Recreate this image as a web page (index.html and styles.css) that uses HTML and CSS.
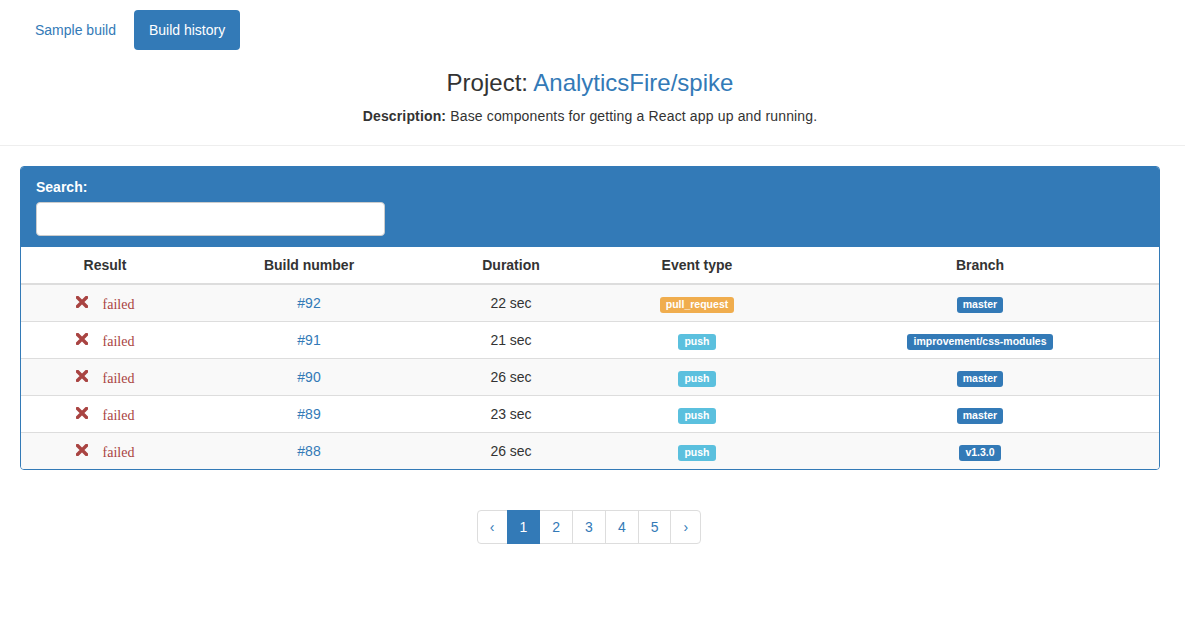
FILE: index.html
```html
<!DOCTYPE html>
<html>
<head>
<meta charset="utf-8">
<link rel="stylesheet" href="styles.css">
</head>
<body>
<div class="wrap">
  <ul class="pills">
    <li><a href="#">Sample build</a></li>
    <li class="active"><a href="#">Build history</a></li>
  </ul>
  <h3 class="title">Project: <a href="#">AnalyticsFire/spike</a></h3>
  <p class="desc"><strong>Description:</strong> Base components for getting a React app up and running.</p>
</div>
<hr class="rule">
<div class="wrap">
  <div class="panel">
    <div class="panel-heading">
      <label class="search-label">Search:</label>
      <input class="search-input" type="text">
    </div>
    <table class="builds">
      <colgroup>
        <col class="c1"><col class="c2"><col class="c3"><col class="c4"><col>
      </colgroup>
      <thead>
        <tr><th>Result</th><th>Build number</th><th>Duration</th><th>Event type</th><th>Branch</th></tr>
      </thead>
      <tbody>
        <tr>
          <td><span class="res"><svg class="x" viewBox="0 0 12 12"><path d="M1.5 1.5L10.5 10.5M10.5 1.5L1.5 10.5"/></svg><span class="failed">failed</span></span></td>
          <td><a href="#">#92</a></td><td>22 sec</td>
          <td><span class="label warn">pull_request</span></td>
          <td><span class="label prim">master</span></td>
        </tr>
        <tr>
          <td><span class="res"><svg class="x" viewBox="0 0 12 12"><path d="M1.5 1.5L10.5 10.5M10.5 1.5L1.5 10.5"/></svg><span class="failed">failed</span></span></td>
          <td><a href="#">#91</a></td><td>21 sec</td>
          <td><span class="label info">push</span></td>
          <td><span class="label prim">improvement/css-modules</span></td>
        </tr>
        <tr>
          <td><span class="res"><svg class="x" viewBox="0 0 12 12"><path d="M1.5 1.5L10.5 10.5M10.5 1.5L1.5 10.5"/></svg><span class="failed">failed</span></span></td>
          <td><a href="#">#90</a></td><td>26 sec</td>
          <td><span class="label info">push</span></td>
          <td><span class="label prim">master</span></td>
        </tr>
        <tr>
          <td><span class="res"><svg class="x" viewBox="0 0 12 12"><path d="M1.5 1.5L10.5 10.5M10.5 1.5L1.5 10.5"/></svg><span class="failed">failed</span></span></td>
          <td><a href="#">#89</a></td><td>23 sec</td>
          <td><span class="label info">push</span></td>
          <td><span class="label prim">master</span></td>
        </tr>
        <tr>
          <td><span class="res"><svg class="x" viewBox="0 0 12 12"><path d="M1.5 1.5L10.5 10.5M10.5 1.5L1.5 10.5"/></svg><span class="failed">failed</span></span></td>
          <td><a href="#">#88</a></td><td>26 sec</td>
          <td><span class="label info">push</span></td>
          <td><span class="label prim">v1.3.0</span></td>
        </tr>
      </tbody>
    </table>
  </div>
  <div class="pager-wrap">
    <ul class="pagination">
      <li><a href="#">&lsaquo;</a></li>
      <li class="active"><a href="#">1</a></li>
      <li><a href="#">2</a></li>
      <li><a href="#">3</a></li>
      <li><a href="#">4</a></li>
      <li><a href="#">5</a></li>
      <li><a href="#">&rsaquo;</a></li>
    </ul>
  </div>
</div>
</body>
</html>
```

FILE: styles.css
```css
* { box-sizing: border-box; }
html, body { margin: 0; padding: 0; background: #fff; }
body {
  font-family: "Liberation Sans", Arial, sans-serif;
  font-size: 14px;
  line-height: 20px;
  color: #333;
}
a { color: #337ab7; text-decoration: none; }
.wrap { padding: 0 25px 0 20px; }

.pills {
  list-style: none;
  margin: 10px 0 0;
  padding: 0;
  display: flex;
  gap: 3px;
}
.pills a {
  display: block;
  padding: 10px 15px;
  border-radius: 4px;
  line-height: 20px;
}
.pills .active a { background: #337ab7; color: #fff; }

.title {
  margin: 20px 0 10px;
  font-size: 24px;
  font-weight: 500;
  line-height: 26.4px;
  text-align: center;
}
.desc {
  margin: 0;
  text-align: center;
  letter-spacing: 0.15px;
}
.rule {
  border: 0;
  border-top: 1px solid #eee;
  margin: 19px 0 20px;
}

.panel {
  border: 1px solid #337ab7;
  border-radius: 4px;
  margin-bottom: 20px;
  overflow: hidden;
}
.panel-heading {
  background: #337ab7;
  color: #fff;
  padding: 10px 15px 11px;
  display: flex;
  flex-direction: column;
  align-items: flex-start;
}
.search-label {
  font-weight: bold;
  margin-bottom: 5px;
}
.search-input {
  width: 349px;
  height: 34px;
  border: 1px solid #ccc;
  border-radius: 4px;
  background: #fff;
  padding: 6px 12px;
  font: inherit;
}

.builds {
  width: 100%;
  border-collapse: collapse;
  table-layout: fixed;
}
.c1 { width: 168px; }
.c2 { width: 240px; }
.c3 { width: 164px; }
.c4 { width: 208px; }
.builds th, .builds td {
  text-align: center;
  padding: 8px;
  line-height: 20px;
  vertical-align: middle;
}
.builds th {
  font-weight: bold;
  border-bottom: 2px solid #ddd;
}
.builds td { border-top: 1px solid #ddd; height: 37px; }
.builds thead + tbody tr:first-child td { border-top: 0; height: 36px; }
.builds tbody tr:last-child td { height: 36px; }
.builds tbody tr:nth-child(odd) { background: #f9f9f9; }

.res {
  display: inline-flex;
  align-items: center;
  gap: 15px;
  height: 20px;
  vertical-align: top;
}
.x {
  width: 12px;
  height: 12px;
  stroke: #a94442;
  stroke-width: 3.4;
  stroke-linecap: square;
  fill: none;
  position: relative;
  top: -1px;
}
.failed {
  font-family: "Liberation Serif", "Times New Roman", serif;
  color: #a94442;
  line-height: 20px;
  position: relative;
  top: 2px;
}

.label {
  display: inline-block;
  font-size: 10.5px;
  font-weight: bold;
  line-height: 11px;
  color: #fff;
  padding: 2px 6px 3px;
  border-radius: 3px;
  vertical-align: middle;
}
.warn { background: #f0ad4e; }
.info { background: #5bc0de; }
.prim { background: #337ab7; }

.pager-wrap { display: flex; justify-content: center; }
.pagination {
  list-style: none;
  display: flex;
  margin: 20px 0;
  padding: 0;
  transform: translateX(-1px);
}
.pagination a {
  display: block;
  padding: 6px 12px;
  line-height: 20px;
  border: 1px solid #ddd;
  margin-left: -1px;
  color: #337ab7;
  background: #fff;
}
.pagination li:first-child a { margin-left: 0; border-radius: 4px 0 0 4px; }
.pagination li:last-child a { border-radius: 0 4px 4px 0; }
.pagination .active a {
  background: #337ab7;
  border-color: #337ab7;
  color: #fff;
  position: relative;
}
```
